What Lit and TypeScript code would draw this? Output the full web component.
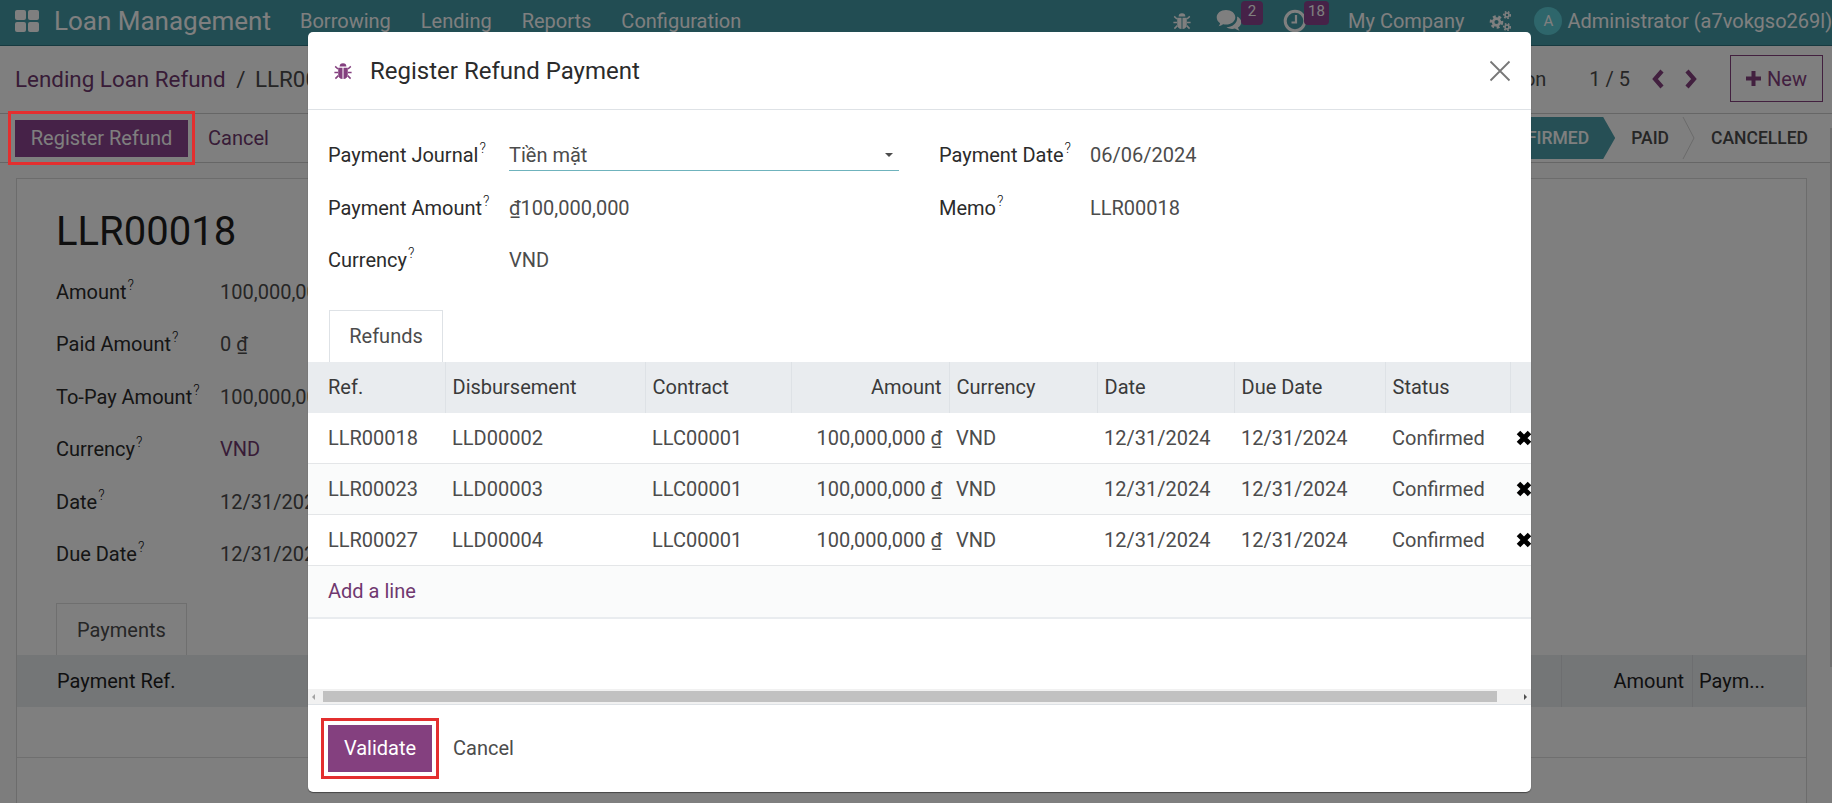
import { LitElement, html, css, svg } from 'lit';
import { customElement } from 'lit/decorators.js';

const bug = (size: number) => html`<svg width=${size} height=${size} viewBox="0 0 20 20" fill="currentColor">
  <path d="M6.600 5.600a3.400 3.400 0 0 1 6.800 0z"/>
  <path d="M5.200 6.800h4.300V18c-2.600-.2-4.300-2-4.300-4.600zM10.500 6.800h4.300v6.600c0 2.600-1.700 4.400-4.300 4.600z"/>
  <path d="M5 8 2.200 5.400M15 8l2.800-2.600M5 11.400H1.400M15 11.400h3.600M5.400 14.600 2.400 17.600M14.600 14.600l3 3" stroke="currentColor" stroke-width="1.500" fill="none"/>
</svg>`;

const comments = html`<svg width="26" height="24" viewBox="0 0 26 24" fill="currentColor">
  <path d="M10 1c5.300 0 9.300 3.200 9.300 7.300S15.300 15.600 10 15.600c-1 0-1.900-.1-2.800-.3-1.300 1-2.800 1.700-4.600 2 .7-.9 1.200-1.900 1.500-3.100C2 12.900.7 10.800.7 8.300.7 4.200 4.700 1 10 1z"/>
  <path d="M21 7.500c2.600 1.200 4.300 3.300 4.300 5.700 0 2.200-1.300 4.100-3.300 5.300.3 1.200.8 2.200 1.600 3.200-1.800-.3-3.400-1-4.700-2.100-.9.200-1.800.3-2.700.3-2.200 0-4.200-.6-5.700-1.600 5.800-.2 10.700-4 10.700-9z"/>
</svg>`;

const clock = html`<svg width="24" height="24" viewBox="0 0 24 24" fill="none" stroke="currentColor">
  <circle cx="12" cy="12" r="9.800" stroke-width="3"/>
  <path d="M13 6v7.500H8.500" stroke-width="2.200"/>
</svg>`;

const gear = (cx: number, cy: number, r: number, sw: number, dash: string) => svg`
  <circle cx=${cx} cy=${cy} r=${r} stroke-width=${sw} />
  <circle cx=${cx} cy=${cy} r=${r + sw * 0.8} stroke-width=${sw} stroke-dasharray=${dash} />`;

const gears = html`<svg width="24" height="22" viewBox="0 0 24 22" fill="none" stroke="currentColor">
  ${gear(8.5, 12, 3.4, 2.6, '2.800 2.600')}
  ${gear(19, 5, 2, 1.6, '1.600 1.600')}
  ${gear(19, 17, 2, 1.6, '1.600 1.600')}
</svg>`;

const chevron = (left: boolean) => html`<svg width="16" height="22" viewBox="0 0 16 22" fill="none" stroke="currentColor" stroke-width="4.200">
  <polyline points=${left ? '12,3 5,11 12,19' : '4,3 11,11 4,19'} />
</svg>`;

const cross = html`<svg class="del" width="16" height="16" viewBox="0 0 16 16" stroke="#000" stroke-width="5" fill="none">
  <path d="M2.500 2.500 13.500 13.500M13.500 2.500 2.500 13.500"/>
</svg>`;

const refunds = [
  ['LLR00018', 'LLD00002'],
  ['LLR00023', 'LLD00003'],
  ['LLR00027', 'LLD00004'],
];

@customElement('app-root')
export class AppRoot extends LitElement {
  static styles = css`
    :host {
      display: block;
      position: relative;
      height: 803px;
      overflow: hidden;
      font-family: Roboto, "Noto Sans", sans-serif;
      font-size: 20px;
      color: #4c4c4c;
      background: #fff;
    }
    sup {
      font-size: 14px;
      font-weight: 300;
      color: #111;
      line-height: 0;
      vertical-align: 9px;
      margin-left: 1px;
    }

    /* page behind the dialog */
    .navbar {
      height: 46px;
      background: #449aa6;
      color: #fff;
      display: flex;
      align-items: center;
      white-space: nowrap;
      border-bottom: 1px solid #2f7480;
      box-sizing: border-box;
      padding-bottom: 3px;
    }
    .apps {
      display: grid;
      grid-template-columns: 11px 11px;
      gap: 2px;
      margin: 0 15px;
      flex: none;
    }
    .apps i {
      height: 10px;
      background: currentColor;
      border-radius: 2px;
    }
    .brand {
      font-size: 26px;
      width: 246px;
      flex: none;
    }
    .menu {
      display: flex;
      gap: 30px;
      flex: none;
    }
    .systray {
      margin-left: auto;
      width: 660px;
      flex: none;
      display: flex;
      align-items: center;
    }
    .tray-item {
      display: flex;
      position: relative;
      flex: none;
    }
    .tray-bug { margin-right: 24px; }
    .tray-comments { margin-right: 41px; }
    .tray-clock { margin-right: 41px; }
    .tray-company { margin-right: 24px; }
    .tray-gears { margin-right: 22px; }
    .badge {
      position: absolute;
      left: 25px;
      top: -8px;
      width: 22px;
      height: 24px;
      background: #8c4490;
      border-radius: 4px;
      font-size: 15px;
      line-height: 20px;
      text-align: center;
    }
    .tray-clock .badge {
      left: 21px;
      width: 25px;
    }
    .avatar {
      width: 28px;
      height: 28px;
      flex: none;
      border-radius: 50%;
      background: #5cccd6;
      font-size: 15px;
      line-height: 28px;
      text-align: center;
      margin-right: 5px;
    }

    .breadcrumb-row {
      height: 67px;
      box-sizing: border-box;
      display: flex;
      align-items: center;
      padding: 0 9px 2px 15px;
      white-space: nowrap;
    }
    .breadcrumb {
      font-size: 22.400px;
      color: #70386f;
    }
    .breadcrumb span {
      color: #4c4c4c;
      margin-left: 5px;
      word-spacing: 4px;
    }
    .pager {
      margin-left: auto;
      display: flex;
      align-items: center;
      color: #84407f;
    }
    .action {
      color: #4c4c4c;
      margin-right: 43px;
    }
    .count {
      color: #4c4c4c;
      margin-right: 20px;
    }
    .pager svg + svg {
      margin-left: 17px;
    }
    .new {
      display: flex;
      align-items: center;
      gap: 6px;
      box-sizing: border-box;
      width: 93px;
      height: 47px;
      margin-left: 31px;
      justify-content: center;
      border: 1.500px solid #84407f;
    }
    .status-row {
      height: 50px;
      box-sizing: border-box;
      border-top: 1px solid #ccc;
      border-bottom: 1px solid #ccc;
      display: flex;
      align-items: center;
      padding-left: 15px;
      white-space: nowrap;
    }
    .btn {
      display: inline-flex;
      align-items: center;
      justify-content: center;
      box-sizing: border-box;
      color: #fff;
    }
    .register {
      width: 173px;
      height: 37px;
      background: #8c4490;
    }
    .link-cancel {
      margin-left: 20px;
      color: #70386f;
    }
    .annotated {
      position: relative;
    }
    .annotated::after {
      content: "";
      position: absolute;
      box-sizing: border-box;
      border: 3px solid #e32f2f;
      z-index: 3;
    }
    .register.annotated::after {
      inset: -9px -7px -8px -7px;
    }
    .statusbar {
      margin-left: auto;
      display: flex;
      align-items: center;
      height: 42px;
      font-size: 17.500px;
      font-weight: 500;
      padding-right: 24px;
    }
    .stage {
      display: flex;
      align-items: center;
      height: 42px;
    }
    .stage.draft {
      padding-right: 16px;
    }
    .stage.current {
      background: #4c9fab;
      color: #fff;
      clip-path: polygon(0 0, calc(100% - 12px) 0, 100% 50%, calc(100% - 12px) 100%, 0 100%);
      padding: 0 26px 0 20px;
    }
    .stage.paid {
      margin-left: 16px;
      margin-right: 13px;
    }
    .stage-sep {
      margin-right: 16px;
    }

    .content {
      display: flex;
      background: #fafafa;
      padding: 15px 25px 0 16px;
    }
    .sheet {
      flex: 1;
      height: 640px;
      box-sizing: border-box;
      background: #fff;
      border: 1px solid #d8d8d8;
      padding: 30px 0 0 39px;
    }
    .sheet h1 {
      margin: 0 0 20px;
      font-size: 40px;
      font-weight: 400;
      line-height: 46px;
      color: #1f1f1f;
    }
    .sheet-field {
      display: flex;
      height: 52.400px;
      align-items: flex-start;
      line-height: 34px;
      white-space: nowrap;
    }
    .sheet-field label {
      width: 164px;
      color: #2b2b2b;
      flex: none;
    }
    .sheet-field .accent {
      color: #70386f;
    }
    .sheet-tab {
      width: 131px;
      height: 52px;
      box-sizing: border-box;
      margin-top: 14px;
      border: 1px solid #dedede;
      border-bottom: 0;
      display: flex;
      align-items: center;
      justify-content: center;
    }
    .sheet-head {
      height: 52px;
      margin-left: -39px;
      background: #e9ecef;
      display: flex;
      align-items: center;
      padding-left: 40px;
      color: #1f1f1f;
    }
    .sheet-head .amount {
      margin-left: auto;
      box-sizing: border-box;
      height: 100%;
      line-height: 52px;
      width: 131px;
      padding-right: 8px;
      border-left: 1px solid #dadde0;
      text-align: right;
    }
    .sheet-head .method {
      box-sizing: border-box;
      height: 100%;
      line-height: 52px;
      width: 114px;
      padding-left: 6px;
      border-left: 1px solid #dadde0;
    }
    .sheet-empty {
      height: 50px;
      margin-left: -39px;
      border-bottom: 1px solid #dedede;
    }
    .page-scroll {
      position: absolute;
      right: 0;
      top: 128px;
      width: 2px;
      height: 539px;
      background: #dcdcdc;
    }

    .dim {
      position: absolute;
      inset: 0;
      background: rgba(0, 0, 0, 0.5);
      z-index: 1;
    }

    /* dialog */
    .modal {
      position: absolute;
      left: 308px;
      top: 32px;
      width: 1223px;
      height: 760px;
      background: #fff;
      border-radius: 5px;
      box-shadow: 0 1px 1px rgba(0, 0, 0, 0.45);
      z-index: 2;
      display: flex;
      flex-direction: column;
      overflow: hidden;
    }
    .modal-header {
      height: 77px;
      flex: none;
      display: flex;
      align-items: center;
      border-bottom: 1px solid #dee2e6;
      padding: 0 20px 0 25px;
      color: #2b2b2b;
    }
    .modal-header .bug {
      color: #84407f;
      display: flex;
      margin-right: 17px;
    }
    .modal-title {
      font-size: 24px;
    }
    .close {
      margin-left: auto;
      display: flex;
    }
    .modal-body {
      flex: 1;
      min-height: 0;
      padding-top: 19px;
    }
    .form-row {
      display: grid;
      grid-template-columns: 181px 390px 191px 1fr;
      height: 52.500px;
      align-items: center;
      padding-left: 20px;
      white-space: nowrap;
    }
    .form-row label {
      color: #2b2b2b;
    }
    .form-row .second {
      margin-left: 40px;
    }
    .select {
      display: flex;
      align-items: center;
      justify-content: space-between;
      height: 31px;
      box-sizing: border-box;
      border-bottom: 1px solid #6fb3bd;
    }
    .caret {
      width: 0;
      height: 0;
      border: 4px solid transparent;
      border-top-color: #4c4c4c;
      border-bottom: 0;
      margin-right: 6px;
    }
    .tabs {
      display: flex;
      margin: 23px 0 0 21px;
    }
    .tab {
      width: 114px;
      height: 52px;
      box-sizing: border-box;
      background: #fff;
      border: 1px solid #dee2e6;
      border-bottom: 0;
      display: flex;
      align-items: center;
      justify-content: center;
    }
    table {
      table-layout: fixed;
      border-collapse: collapse;
      width: 1243px;
    }
    th, td {
      box-sizing: border-box;
      padding: 0 7px;
      text-align: left;
      white-space: nowrap;
      overflow: hidden;
    }
    thead tr {
      height: 51px;
      background: #e9ecef;
    }
    th {
      font-weight: 400;
      border-right: 1px solid #dee2e6;
      color: #3a3a3a;
    }
    tbody tr {
      height: 51px;
      border-bottom: 1px solid #e4e6e8;
    }
    tbody tr:nth-child(even) {
      background: #fafbfb;
    }
    tbody tr.add {
      height: 52px;
      border-bottom: 2px solid #e9ecef;
    }
    th:first-child, td:first-child {
      padding-left: 20px;
    }
    .num {
      text-align: right;
    }
    .del {
      display: block;
      margin-left: -1px;
    }
    .add-line {
      color: #70386f;
    }
    .hscroll {
      flex: none;
      height: 15px;
      box-sizing: border-box;
      background: #f1f1f1;
      display: flex;
      align-items: center;
      padding: 0 4px;
      gap: 4px;
    }
    .hscroll .arrow {
      width: 0;
      height: 0;
      border: 3.500px solid transparent;
    }
    .hscroll .arrow.l {
      border-right-color: #a3a3a3;
      border-left: 0;
    }
    .hscroll .arrow.r {
      border-left-color: #505050;
      border-right: 0;
      margin-left: auto;
    }
    .hscroll .thumb {
      width: 1174px;
      height: 11px;
      margin-left: 4px;
      background: #c1c1c1;
    }
    .modal-footer {
      height: 88px;
      flex: none;
      box-sizing: border-box;
      border-top: 1px solid #dee2e6;
      display: flex;
      align-items: center;
      padding-left: 20px;
      gap: 21px;
    }
    .modal-footer span {
      margin-bottom: 2px;
    }
    .validate {
      width: 104px;
      height: 47px;
      padding-bottom: 2px;
      background: #84407f;
    }
    .validate.annotated::after {
      inset: -7px;
    }
  `;

  render() {
    return html`
      <header class="navbar">
        <div class="apps"><i></i><i></i><i></i><i></i></div>
        <div class="brand">Loan Management</div>
        <nav class="menu">
          <span>Borrowing</span><span>Lending</span><span>Reports</span><span>Configuration</span>
        </nav>
        <div class="systray">
          <div class="tray-item tray-bug">${bug(20)}</div>
          <div class="tray-item tray-comments">${comments}<span class="badge">2</span></div>
          <div class="tray-item tray-clock">${clock}<span class="badge">18</span></div>
          <span class="tray-item tray-company">My Company</span>
          <div class="tray-item tray-gears">${gears}</div>
          <div class="avatar">A</div>
          <span>Administrator (a7vokgso269l)</span>
        </div>
      </header>

      <div class="breadcrumb-row">
        <div class="breadcrumb">Lending Loan Refund <span>/ LLR00018</span></div>
        <div class="pager">
          <span class="action">Action</span>
          <span class="count">1 / 5</span>
          ${chevron(true)}${chevron(false)}
          <div class="new">
            <svg width="15" height="15" viewBox="0 0 15 15" fill="currentColor"><path d="M5.500 0h4v5.500H15v4H9.500V15h-4V9.500H0v-4h5.500z"/></svg>
            New
          </div>
        </div>
      </div>

      <div class="status-row">
        <div class="btn register annotated">Register Refund</div>
        <span class="link-cancel">Cancel</span>
        <div class="statusbar">
          <div class="stage draft">DRAFT</div>
          <div class="stage current">CONFIRMED</div>
          <div class="stage paid">PAID</div>
          <svg class="stage-sep" width="13" height="42" viewBox="0 0 13 42" fill="none" stroke="#d5d5d5"><polyline points="1,0 12,21 1,42"/></svg>
          <div class="stage">CANCELLED</div>
        </div>
      </div>

      <main class="content">
        <section class="sheet">
          <h1>LLR00018</h1>
          <div class="sheet-field"><label>Amount<sup>?</sup></label><span>100,000,000 ₫</span></div>
          <div class="sheet-field"><label>Paid Amount<sup>?</sup></label><span>0 ₫</span></div>
          <div class="sheet-field"><label>To-Pay Amount<sup>?</sup></label><span>100,000,000 ₫</span></div>
          <div class="sheet-field"><label>Currency<sup>?</sup></label><span class="accent">VND</span></div>
          <div class="sheet-field"><label>Date<sup>?</sup></label><span>12/31/2024</span></div>
          <div class="sheet-field"><label>Due Date<sup>?</sup></label><span>12/31/2024</span></div>
          <div class="sheet-tab">Payments</div>
          <div class="sheet-head">
            <span>Payment Ref.</span>
            <span class="amount">Amount</span>
            <span class="method">Paym...</span>
          </div>
          <div class="sheet-empty"></div>
        </section>
      </main>
      <div class="page-scroll"></div>

      <div class="dim"></div>

      <div class="modal">
        <div class="modal-header">
          <span class="bug">${bug(20)}</span>
          <span class="modal-title">Register Refund Payment</span>
          <span class="close">
            <svg width="22" height="22" viewBox="0 0 22 22" stroke="#777" stroke-width="1.800" fill="none"><path d="M1.500 1.500 20.500 20.500M20.500 1.500 1.500 20.500"/></svg>
          </span>
        </div>
        <div class="modal-body">
          <div class="form-row">
            <label>Payment Journal<sup>?</sup></label>
            <div class="select"><span>Tiền mặt</span><i class="caret"></i></div>
            <label class="second">Payment Date<sup>?</sup></label>
            <span>06/06/2024</span>
          </div>
          <div class="form-row">
            <label>Payment Amount<sup>?</sup></label>
            <span>₫100,000,000</span>
            <label class="second">Memo<sup>?</sup></label>
            <span>LLR00018</span>
          </div>
          <div class="form-row">
            <label>Currency<sup>?</sup></label>
            <span>VND</span>
          </div>
          <div class="tabs"><div class="tab">Refunds</div></div>
          <table>
            <colgroup>
              <col style="width:137px" /><col style="width:200px" /><col style="width:146px" /><col style="width:158px" />
              <col style="width:148px" /><col style="width:137px" /><col style="width:151px" /><col style="width:125px" /><col />
            </colgroup>
            <thead>
              <tr>
                <th>Ref.</th><th>Disbursement</th><th>Contract</th><th class="num">Amount</th>
                <th>Currency</th><th>Date</th><th>Due Date</th><th>Status</th><th></th>
              </tr>
            </thead>
            <tbody>
              ${refunds.map(
                ([ref, disb]) => html`<tr>
                  <td>${ref}</td><td>${disb}</td><td>LLC00001</td><td class="num">100,000,000 ₫</td>
                  <td>VND</td><td>12/31/2024</td><td>12/31/2024</td><td>Confirmed</td><td>${cross}</td>
                </tr>`
              )}
              <tr class="add"><td colspan="9"><span class="add-line">Add a line</span></td></tr>
            </tbody>
          </table>
        </div>
        <div class="hscroll"><i class="arrow l"></i><i class="thumb"></i><i class="arrow r"></i></div>
        <div class="modal-footer">
          <div class="btn validate annotated">Validate</div>
          <span>Cancel</span>
        </div>
      </div>
    `;
  }
}
